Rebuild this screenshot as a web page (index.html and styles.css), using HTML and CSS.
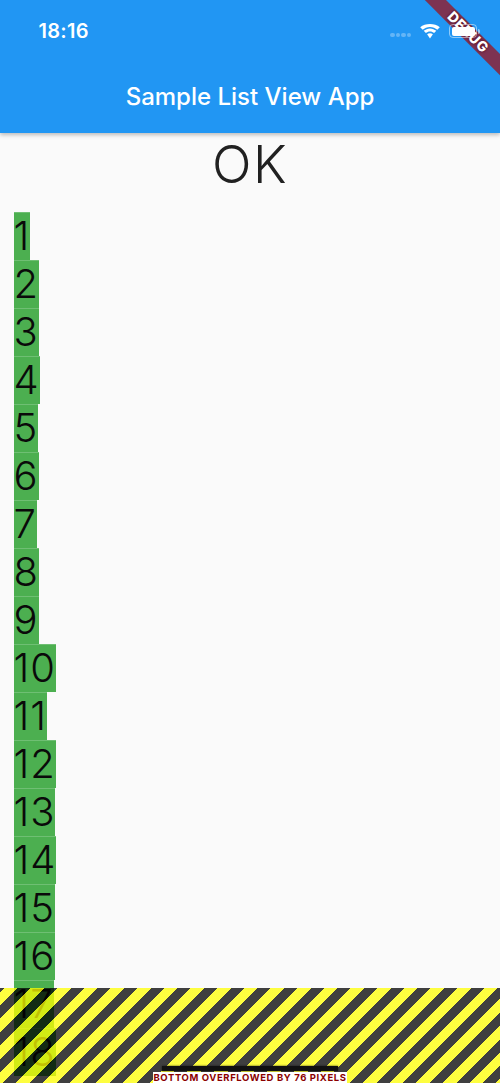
FILE: index.html
```html
<!DOCTYPE html>
<html lang="en">
<head>
    <meta charset="UTF-8">
    <meta name="viewport" content="width=device-width, initial-scale=1.0">
    <title>Sample List View App</title>
    <link rel="stylesheet" href="styles.css">
</head>
<body>
    <div class="screen">
        <header class="app-bar">
            <div class="status-bar">
                <span class="time">18:16</span>
                <div class="status-icons">
                    <div class="signal">
                        <span></span><span></span><span></span><span></span>
                    </div>
                    <svg class="wifi" width="20" height="15" viewBox="0 0 20 15">
                        <path d="M10 2.900c2.800 0 5.400 1.100 7.300 2.900L19.800 3.300C17.200.9 13.800 0 10 0S2.800.9.200 3.300l2.500 2.500C4.600 4 7.200 2.900 10 2.900z" fill="#fff"/>
                        <path d="M10 7.500c1.600 0 3 .6 4.100 1.600l2.200-2.300C14.600 5.300 12.400 4.400 10 4.400s-4.600.9-6.300 2.400l2.200 2.300C7 8.100 8.400 7.500 10 7.500z" fill="#fff"/>
                        <path d="M10 9.200c-1.100 0-2.100.4-2.900 1.100L10 14.500l2.900-4.200C12.100 9.600 11.100 9.200 10 9.200z" fill="#fff"/>
                    </svg>
                    <div class="battery-wrap">
                        <div class="battery"><div class="battery-fill"></div></div>
                        <div class="battery-tip"></div>
                    </div>
                </div>
            </div>
            <div class="toolbar">Sample List View App</div>
        </header>

        <h1 class="page-title">OK</h1>

        <div class="num-list">
            <div class="num-item">1</div>
            <div class="num-item">2</div>
            <div class="num-item">3</div>
            <div class="num-item">4</div>
            <div class="num-item">5</div>
            <div class="num-item">6</div>
            <div class="num-item">7</div>
            <div class="num-item">8</div>
            <div class="num-item">9</div>
            <div class="num-item">10</div>
            <div class="num-item">11</div>
            <div class="num-item">12</div>
            <div class="num-item">13</div>
            <div class="num-item">14</div>
            <div class="num-item">15</div>
            <div class="num-item">16</div>
            <div class="num-item">17</div>
            <div class="num-item">18</div>
        </div>

        <div class="overflow-stripes">
            <div class="overflow-shadow"></div>
            <div class="overflow-label">BOTTOM OVERFLOWED BY 76 PIXELS</div>
        </div>

        <div class="debug-banner">DEBUG</div>
    </div>
</body>
</html>
```

FILE: styles.css
```css
body {
    margin: 0;
    background: #fafafa;
    font-family: Inter, "Liberation Sans", sans-serif;
}

.screen {
    position: relative;
    width: 500px;
    height: 1083px;
    overflow: hidden;
    background: #fafafa;
}

.app-bar {
    height: 133px;
    background: #2196f3;
    color: white;
    box-shadow: 0 2px 4px rgba(0,0,0,0.25);
    position: relative;
}

/* status icons sit on top of the debug ribbon */
.status-bar {
    position: relative;
    z-index: 2;
    height: 61px;
    display: flex;
    justify-content: space-between;
    align-items: center;
    padding: 1px 20px 0 38.500px;
    box-sizing: border-box;
}

.time {
    font-size: 20px;
    font-weight: 600;
    letter-spacing: 0.3px;
}

.status-icons {
    display: flex;
    align-items: center;
    gap: 9px;
}

.signal {
    display: flex;
    gap: 1px;
    margin-top: 8px;
}

.signal span {
    width: 4.500px;
    height: 4.500px;
    border-radius: 50%;
    background: rgba(255,255,255,0.3);
}

.battery-wrap {
    display: flex;
    align-items: center;
    gap: 1px;
}

.battery {
    width: 28px;
    height: 14px;
    box-sizing: border-box;
    padding: 1.500px;
    border: 1px solid rgba(255,255,255,0.5);
    border-radius: 4px;
}

.battery-fill {
    height: 100%;
    background: white;
    border-radius: 2px;
}

.battery-tip {
    width: 2px;
    height: 5px;
    background: rgba(255,255,255,0.5);
    border-radius: 0 2px 2px 0;
}

.toolbar {
    height: 72px;
    line-height: 72px;
    text-align: center;
    font-size: 24px;
    font-weight: 500;
}

.page-title {
    height: 79px;
    line-height: 64px;
    margin: 0;
    text-align: center;
    font-size: 52px;
    font-weight: 300;
    letter-spacing: 1.500px;
    color: #212121;
}

.num-list {
    display: flex;
    flex-direction: column;
    align-items: flex-start;
    padding-left: 13.500px;
}

.num-item {
    height: 48px;
    line-height: 48px;
    font-size: 40px;
    font-weight: 300;
    letter-spacing: 1px;
    color: #0a0a0a;
    background: #4caf50;
    box-shadow: inset 0 1px rgba(255,255,255,0.2);
}

.overflow-stripes {
    position: absolute;
    left: 0;
    right: 0;
    bottom: 0;
    height: 95px;
    display: flex;
    flex-direction: column;
    justify-content: flex-end;
    align-items: center;
    background: repeating-linear-gradient(-45deg,
        rgba(255,255,0,0.75) 0 2.900px,
        rgba(0,0,0,0.75) 2.900px 12.100px,
        rgba(255,255,0,0.75) 12.100px 18.860px);
}

.overflow-shadow {
    width: 176px;
    height: 5px;
    margin-bottom: 1px;
    background: #111;
    box-shadow: 0 0 2px #111;
}

.overflow-label {
    width: 194px;
    height: 11px;
    line-height: 11px;
    text-align: center;
    background: white;
    color: #8b0000;
    font-size: 9.500px;
    font-weight: 700;
    letter-spacing: 0.6px;
    white-space: nowrap;
}

.debug-banner {
    position: absolute;
    z-index: 1;
    top: 24.500px;
    right: -37.500px;
    width: 140px;
    height: 14.500px;
    line-height: 14.500px;
    text-align: center;
    transform: rotate(45deg);
    background: #7d3352;
    color: white;
    font-size: 14px;
    font-weight: 800;
    letter-spacing: 0.5px;
    text-shadow: 0 0 3px #4a0010;
}
```
